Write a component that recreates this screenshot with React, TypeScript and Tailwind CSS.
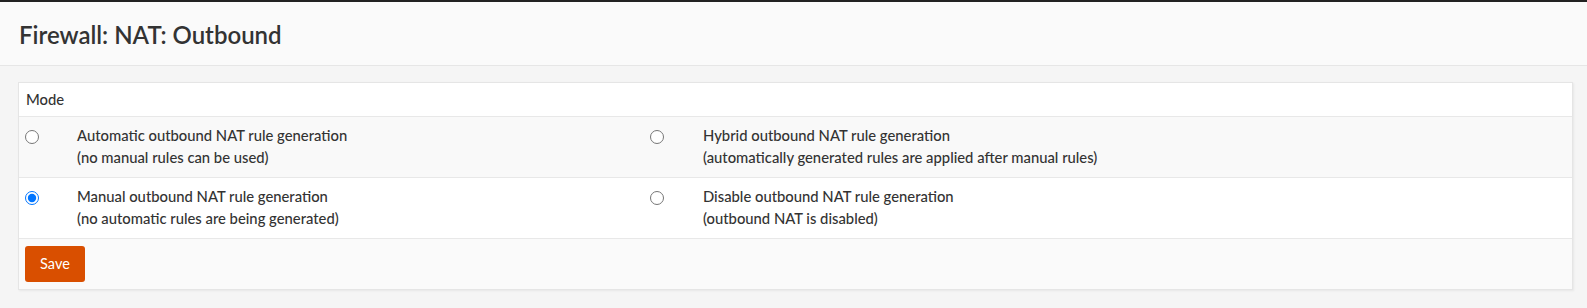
const rows = [
  [
    {
      title: "Automatic outbound NAT rule generation",
      note: "(no manual rules can be used)",
      checked: false,
    },
    {
      title: "Hybrid outbound NAT rule generation",
      note: "(automatically generated rules are applied after manual rules)",
      checked: false,
    },
  ],
  [
    {
      title: "Manual outbound NAT rule generation",
      note: "(no automatic rules are being generated)",
      checked: true,
    },
    {
      title: "Disable outbound NAT rule generation",
      note: "(outbound NAT is disabled)",
      checked: false,
    },
  ],
];

function ModeOption({ opt }: { opt: { title: string; note: string; checked: boolean } }) {
  return (
    <>
      <div className="pl-[6px] pt-[10px]">
        <input
          type="radio"
          name="mode"
          defaultChecked={opt.checked}
          className="m-0 h-[14px] w-[14px] accent-[#0075ff]"
        />
      </div>
      <div className="pl-[6px] pt-[7px] pb-[9px] leading-[22px]">
        <div>{opt.title}</div>
        <div>{opt.note}</div>
      </div>
    </>
  );
}

export default function App() {
  return (
    <div className="min-h-[308px] bg-[#f5f5f5] font-['Lato','Liberation_Sans',sans-serif] text-[#333]">
      <div className="h-[2px] bg-[#222]" />
      <div className="flex h-[64px] items-center border-b border-[#e6e6e6] bg-[#fafafa] px-[19px] pt-[3px]">
        <h1 className="text-[24px] font-semibold text-[#333]">Firewall: NAT: Outbound</h1>
      </div>
      <div className="ml-[18px] mr-[14px] mt-[16px] border border-[#e5e5e5] bg-white text-[14.8px] font-medium shadow-[1px_1px_2px_rgba(0,0,0,0.06)]">
        <div className="flex h-[34px] items-center border-b border-[#e8e8e8] px-[7px]">Mode</div>
        {rows.map((row, i) => (
          <div
            key={i}
            className={`grid grid-cols-[52px_573px_53px_1fr] border-b border-[#e8e8e8] ${
              i % 2 === 0 ? "bg-[#f9f9f9]" : "bg-white"
            }`}
          >
            <ModeOption opt={row[0]} />
            <ModeOption opt={row[1]} />
          </div>
        ))}
        <div className="bg-[#fafafa] px-[6px] pt-[7px] pb-[7px]">
          <button className="h-[36px] w-[60px] rounded-[3px] bg-[#d94f00] text-[14.5px] font-normal text-white">
            Save
          </button>
        </div>
      </div>
    </div>
  );
}
